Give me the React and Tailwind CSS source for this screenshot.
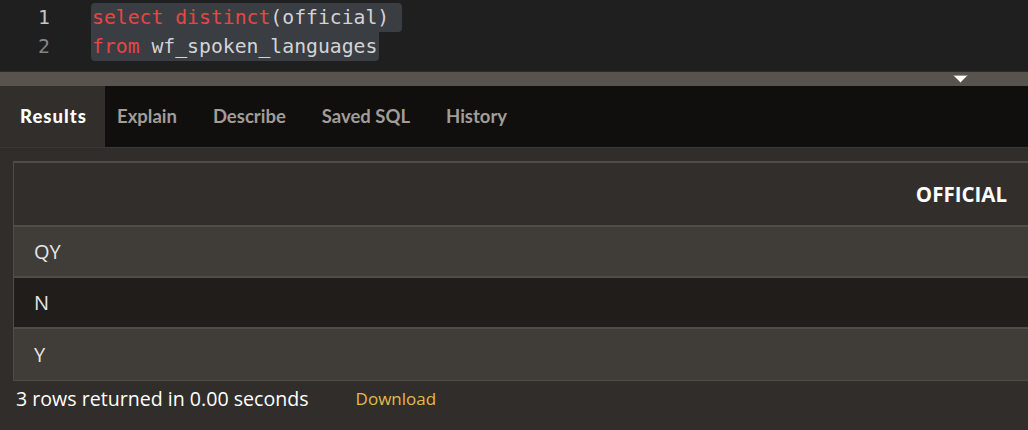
export default function App() {
  const tabs = ["Results", "Explain", "Describe", "Saved SQL", "History"];
  const rows = [
    { v: "QY", bg: "bg-[#403c37]" },
    { v: "N", bg: "bg-[#211d1b]" },
    { v: "Y", bg: "bg-[#403c37]" },
  ];
  return (
    <div className="w-[1028px] h-[430px] overflow-hidden bg-[#312d2a] flex flex-col">
      {/* Editor */}
      <div className="h-[72px] bg-[#1f1f1f] border-b border-[#2c2c2c] flex font-['DejaVu_Sans_Mono',monospace] text-[19.75px] shrink-0 pt-[3px]">
        <div className="w-[50px] flex flex-col items-end text-right leading-[29px]">
          <span className="text-[#c6c6c6]">1</span>
          <span className="text-[#858585]">2</span>
        </div>
        <div className="ml-[41px] flex flex-col items-start leading-[29px]">
          <div className="bg-[#3a3d42] rounded-t-[4px] rounded-br-[4px] pl-[1px] pr-[13px] whitespace-pre">
            <span className="text-[#e84545]">select distinct</span>
            <span className="text-[#d4d4d4]">(official)</span>
          </div>
          <div className="bg-[#3a3d42] rounded-b-[4px] pl-[1px] pr-[2px] whitespace-pre">
            <span className="text-[#e84545]">from</span>
            <span className="text-[#d4d4d4]"> wf_spoken_languages</span>
          </div>
        </div>
      </div>
      {/* Splitter */}
      <div className="h-[14px] bg-[#58534d] relative shrink-0">
        <svg className="absolute left-[953px] top-[3px]" width="15" height="8" viewBox="0 0 15 8">
          <path d="M0.5 0.5 L14.5 0.5 L7.5 7.5 Z" fill="#ffffff" stroke="#8a8580" strokeWidth="0.6" />
        </svg>
      </div>
      {/* Tabs */}
      <div className="h-[62px] bg-[#100f0e] border-b border-[#3b3733] flex shrink-0 font-['Lato',sans-serif] font-bold text-[18.5px]">
        {tabs.map((t, i) => (
          <div
            key={t}
            className={
              i === 0
                ? "h-full w-[105px] flex items-center pl-[20px] bg-[#322e2b] text-white font-black tracking-[1px]"
                : i === 1
                ? "h-full flex items-center pl-[12px] pr-[18px] text-[#a29d98]"
                : "h-full flex items-center px-[18px] text-[#a29d98]"
            }
          >
            {t}
          </div>
        ))}
      </div>
      {/* Results */}
      <div className="pl-[13px] pt-[13px] flex flex-col">
        <div className="border-l border-t-2 border-b border-[#514c47] w-[1030px] font-['Open_Sans',sans-serif]">
          <div className="h-[64px] bg-[#322e2b] border-b-2 border-[#514c47] flex items-center justify-end pr-[36px]">
            <span className="font-bold text-[20.5px] text-white">OFFICIAL</span>
          </div>
          {rows.map((r, i) => (
            <div
              key={i}
              className={`${i < 2 ? "h-[51px] border-b-2 border-[#514c47]" : "h-[51px]"} ${r.bg} flex items-center pl-[20px] text-[20px] text-[#e6e6e6]`}
            >
              {r.v}
            </div>
          ))}
        </div>
        <div className="flex items-center mt-[6px] h-[24px] font-['Open_Sans',sans-serif]">
          <span className="ml-[3px] text-[19.6px] text-white">3 rows returned in 0.00 seconds</span>
          <span className="ml-[47px] text-[17px] text-[#e8b84a]">Download</span>
        </div>
      </div>
    </div>
  );
}
